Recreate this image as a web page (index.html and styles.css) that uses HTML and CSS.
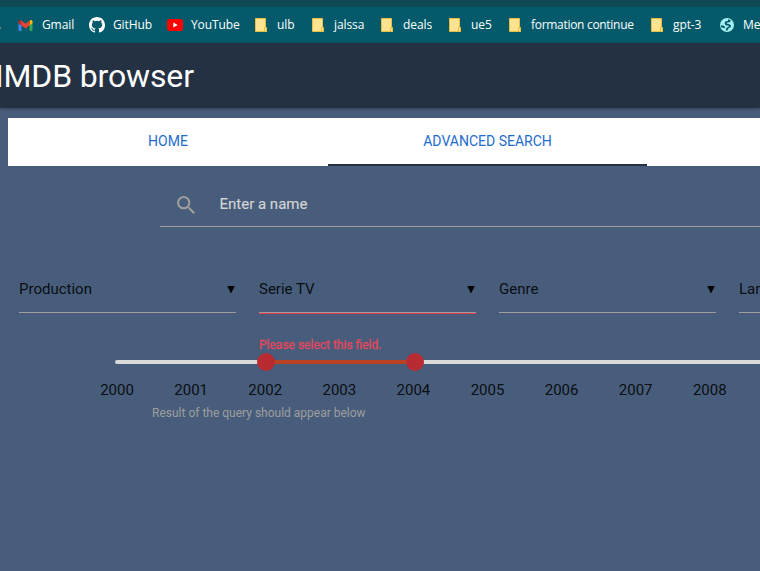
FILE: index.html
```html
<!DOCTYPE html>
<html lang="en">
<head>
<meta charset="utf-8">
<title>IMDB browser</title>
<link rel="stylesheet" href="styles.css">
</head>
<body>
<svg class="defs" width="0" height="0" aria-hidden="true">
  <symbol id="folder" viewBox="0 0 12 14"><path fill="#ffe390" stroke="#e9bd3f" d="M.5.5h10v9h1v4H.5z"/><path fill="#ffe390" stroke="#e9bd3f" d="M9.500 13.500v-4h2v4z"/></symbol>
</svg>
<div class="window-edge"></div>
<nav class="bookmarks">
  <span class="clipped">.</span>
  <a class="mark"><svg class="gmail" viewBox="0 0 14 11"><path fill="#4285f4" d="M0 2h3v9H1Q0 11 0 10z"/><path fill="#34a853" d="M11 2h3v8q0 1-1 1h-2z"/><path fill="#c5221f" d="M0 1.500Q.5-.5 2.500.3L3 5.500 0 3.300z"/><path fill="#fbbc04" d="M14 1.500Q13.500-.5 11.500.3L11 5.500l3-2.200z"/><path fill="#ea4335" d="M2.500.3 7 3.700 11.500.3 11 5.500l-4 3-4-3z"/></svg>Gmail</a>
  <a class="mark"><svg class="github" viewBox="0 0 16 16"><path fill="#fff" d="M8 0C3.580 0 0 3.580 0 8c0 3.540 2.290 6.530 5.470 7.590.4.070.55-.17.55-.38 0-.19-.01-.82-.01-1.490-2.010.37-2.530-.49-2.690-.94-.09-.23-.48-.94-.82-1.130-.28-.15-.68-.52-.01-.53.63-.01 1.080.58 1.230.82.72 1.210 1.870.87 2.330.66.070-.52.28-.87.51-1.070-1.780-.2-3.640-.89-3.640-3.950 0-.87.31-1.590.82-2.150-.08-.2-.36-1.020.08-2.120 0 0 .67-.21 2.200.82a7.600 7.600 0 0 1 4 0c1.530-1.040 2.200-.82 2.200-.82.44 1.100.16 1.920.08 2.120.51.56.82 1.270.82 2.150 0 3.070-1.870 3.750-3.650 3.950.29.25.54.73.54 1.480 0 1.070-.01 1.930-.01 2.200 0 .21.15.46.55.38A8 8 0 0 0 16 8c0-4.420-3.580-8-8-8z"/></svg>GitHub</a>
  <a class="mark"><svg class="youtube" viewBox="0 0 16 12"><rect width="16" height="12" rx="2.800" fill="#f00"/><path fill="#fff" d="M6.300 3.500v5l4.400-2.500z"/></svg>YouTube</a>
  <a class="mark"><svg class="folder"><use href="#folder"/></svg>ulb</a>
  <a class="mark"><svg class="folder"><use href="#folder"/></svg>jalssa</a>
  <a class="mark"><svg class="folder"><use href="#folder"/></svg>deals</a>
  <a class="mark"><svg class="folder"><use href="#folder"/></svg>ue5</a>
  <a class="mark long"><svg class="folder"><use href="#folder"/></svg>formation continue</a>
  <a class="mark"><svg class="folder"><use href="#folder"/></svg>gpt-3</a>
  <a class="mark"><svg class="globe" viewBox="0 0 14 14"><circle cx="7" cy="7" r="7" fill="#a1eff0"/><path fill="#045a6b" d="M8.200 1.200 11 2.600 9.600 4.300 7.300 4.600 6.800 5.800 9.500 6.200 11 7.500 10.600 9.300 8.300 10.600 7.500 12.600 5.800 12.500 6.200 10 8.800 8.700 8.600 7.800 5.800 7.300 4.600 5.800 5.200 3.600 7.800 3zM.8 7.200l3.200.6 1.200 1.400-1 1-3-1z"/></svg>Media</a>
</nav>
<header class="app-bar"><h1>IMDB browser</h1></header>
<main>
  <div class="tabs"><a>HOME</a><a class="active">ADVANCED SEARCH</a><a></a></div>
  <div class="search">
    <svg viewBox="0 0 18 18"><path fill="#9e9e9e" d="M12.500 11h-.8l-.3-.3A6.470 6.470 0 0 0 13 6.500 6.500 6.500 0 1 0 6.500 13c1.600 0 3.100-.6 4.200-1.600l.3.300v.8l5 5 1.500-1.500zm-6 0a4.500 4.500 0 1 1 0-9 4.500 4.500 0 0 1 0 9z"/></svg>
    <span>Enter a name</span>
  </div>
  <div class="selects">
    <div class="field"><div class="select"><span>Production</span><i></i></div></div>
    <div class="field invalid"><div class="select"><span>Serie TV</span><i></i></div><p>Please select this field.</p></div>
    <div class="field"><div class="select"><span>Genre</span><i></i></div></div>
    <div class="field"><div class="select"><span>Language</span><i></i></div></div>
  </div>
  <div class="slider"><div class="range"><b></b><b></b></div></div>
  <div class="years"><span>2000</span><span>2001</span><span>2002</span><span>2003</span><span>2004</span><span>2005</span><span>2006</span><span>2007</span><span>2008</span></div>
  <p class="result">Result of the query should appear below</p>
</main>
</body>
</html>
```

FILE: styles.css
```css
* { box-sizing: border-box; }
html, body { margin: 0; height: 100%; overflow: hidden; }
body { width: 760px; background: #475d7b; font: 15px Roboto, sans-serif; color: rgba(0, 0, 0, .87); }
p, h1 { margin: 0; }
.defs { display: block; height: 0; }
.window-edge { height: 7px; background: #0e4854; }
.bookmarks {
  height: 36px; background: #045a6b; color: #fff; overflow: hidden;
  display: grid; align-items: center; white-space: nowrap;
  grid-template-columns: 18px 71px 78px 88px 57px 69px 68px 60px 142px 69px 80px;
  font: 12px/16px "Open Sans", sans-serif; letter-spacing: -.1px;
}
.clipped { margin-left: -2px; }
.mark { display: flex; align-items: center; }
.mark.long { letter-spacing: -.3px; }
.mark svg { flex: none; }
.gmail { width: 15px; height: 11px; margin-right: 9px; }
.github { width: 16px; height: 16px; margin-right: 8px; }
.youtube { width: 16px; height: 12px; margin-right: 8px; }
.folder { width: 12px; height: 14px; margin-right: 10px; }
.globe { width: 14px; height: 14px; margin-right: 9px; }
.app-bar {
  height: 65px; background: #243142; color: #fff; position: relative;
  box-shadow: 0 1px 3px rgba(0, 0, 0, .3);
}
.app-bar h1 { font-size: 32px; font-weight: 400; line-height: 67px; margin-left: -5px; letter-spacing: -.15px; white-space: nowrap; }
main { padding-top: 10px; }
.tabs {
  height: 48px; width: 960px; margin-left: 8px; background: #fff;
  display: grid; grid-template-columns: 320px 319px 321px;
}
.tabs a { color: #1c6dd0; font-size: 14px; line-height: 46px; text-align: center; }
.tabs .active { border-bottom: 2px solid #243142; }
.search {
  height: 45px; margin: 16px 0 0 160px; border-bottom: 1px solid #9e9e9e;
  display: flex; align-items: center; gap: 24px; padding-left: 17px; color: #d4d4d4;
}
.search svg { width: 18.500px; height: 18.500px; margin-top: 2px; }
.search span { -webkit-text-stroke: .15px #d4d4d4; }
.selects { display: grid; grid-template-columns: repeat(4, 217px); gap: 23px; padding: 38px 0 0 19px; height: 133px; }
.select {
  height: 48px; border-bottom: 1px solid #9e9e9e;
  display: flex; align-items: center; justify-content: space-between;
}
.select i {
  width: 8px; height: 8px; margin: 2px 1px 0 0; background: #000;
  clip-path: polygon(0 0, 100% 0, 50% 100%);
}
.invalid .select { box-shadow: 0 1px 0 #e5394f; }
.invalid p { font-size: 12px; line-height: 14px; margin-top: 25px; color: #e5475c; -webkit-text-stroke: .3px #e5475c; }
.slider { height: 4px; width: 800px; margin-left: 115px; border-radius: 2px; background: #d9d9d9; }
.range {
  width: 167px; height: 4px; margin-left: 142px;
  background: linear-gradient(#b94225, #b94225) center / 150px 4px no-repeat;
  display: flex; align-items: center; justify-content: space-between;
}
.range b { flex: none; width: 18px; height: 18px; border-radius: 50%; background: #b82b33; }
.years { display: grid; grid-template-columns: repeat(9, 74.1px); margin: 16px 0 0 80px; line-height: 20px; text-align: center; }
.result { font-size: 12px; line-height: 16px; margin: 5px 0 0 152px; color: #9e9e9e; }
```
